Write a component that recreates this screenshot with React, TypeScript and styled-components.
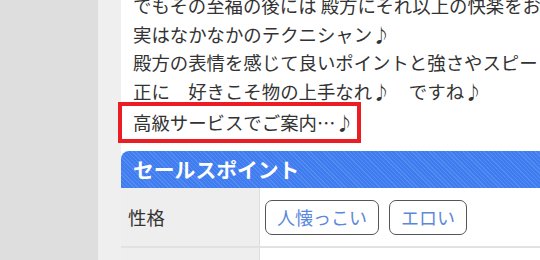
import React from 'react';
import styled, { createGlobalStyle } from 'styled-components';

const GlobalStyle = createGlobalStyle`
  html, body {
    margin: 0;
    padding: 0;
    background: #ffffff;
  }
  body {
    font-family: "Noto Sans CJK JP", "Noto Sans", sans-serif;
    color: #333333;
  }
`;

const Page = styled.div`
  display: flex;
  width: 540px;
  height: 260px;
  overflow: hidden;
`;

const Sidebar = styled.div`
  width: 98px;
  flex-shrink: 0;
  background-color: #dedede;
`;

const Gutter = styled.div`
  width: 23px;
  flex-shrink: 0;
  background-color: #efefef;
`;

const Main = styled.div`
  flex: 1;
  min-width: 0;
  background-color: #ffffff;
  white-space: nowrap;
`;

const Article = styled.div`
  margin-top: -9px;
  padding-left: 12px;
  font-size: 18.4px;
  line-height: 28.6px;
`;

const Line = styled.p`
  margin: 0;
`;

const Highlight = styled.div`
  box-sizing: border-box;
  margin: -3px 0 0 -3px;
  width: 243px;
  padding: 1px 0 2px 11px;
  border: 4px solid #ec1c24;
  font-size: 18.4px;
  line-height: 30px;
`;

const SectionTitle = styled.h2`
  margin: 8px 0 0;
  height: 37px;
  padding-left: 12px;
  display: flex;
  align-items: center;
  border-radius: 8px 0 0 0;
  background-color: #3e7cf0;
  background-image: repeating-linear-gradient(
    45deg,
    rgba(255, 255, 255, 0.12) 0 1px,
    rgba(255, 255, 255, 0) 1px 3px
  );
  color: #ffffff;
  font-size: 20.8px;
  font-weight: 700;
  line-height: 1;
`;

const Table = styled.div`
  display: grid;
  grid-template-columns: 139px 1fr;
`;

const HeadCell = styled.div<{ $last?: boolean }>`
  display: flex;
  align-items: center;
  padding-left: 7px;
  height: 58px;
  background-color: #eeeeee;
  border-right: 1px solid #dddddd;
  border-bottom: ${p => (p.$last ? 'none' : '2px solid #e2e2e2')};
  font-size: 18.4px;
`;

const DataCell = styled.div<{ $last?: boolean }>`
  display: flex;
  align-items: center;
  gap: 10px;
  padding-left: 5px;
  height: 58px;
  border-bottom: ${p => (p.$last ? 'none' : '2px solid #e2e2e2')};
`;

const Tag = styled.span`
  display: inline-flex;
  align-items: center;
  box-sizing: border-box;
  height: 35px;
  padding: 0 11px;
  border: 1px solid #555555;
  border-radius: 7px;
  color: #5a88dc;
  font-size: 18px;
  line-height: 1;
`;

const lines = [
  'でもその至福の後には 殿方にそれ以上の快楽をお',
  '実はなかなかのテクニシャン♪',
  '殿方の表情を感じて良いポイントと強さやスピー',
  '正に　好きこそ物の上手なれ♪　ですね♪',
];

const tags = ['人懐っこい', 'エロい'];

export default function App() {
  return (
    <>
      <GlobalStyle />
      <Page>
        <Sidebar />
        <Gutter />
        <Main>
          <Article>
            {lines.map(text => (
              <Line key={text}>{text}</Line>
            ))}
          </Article>
          <Highlight>高級サービスでご案内…♪</Highlight>
          <SectionTitle>セールスポイント</SectionTitle>
          <Table>
            <HeadCell>性格</HeadCell>
            <DataCell>
              {tags.map(tag => (
                <Tag key={tag}>{tag}</Tag>
              ))}
            </DataCell>
            <HeadCell $last />
            <DataCell $last />
          </Table>
        </Main>
      </Page>
    </>
  );
}
